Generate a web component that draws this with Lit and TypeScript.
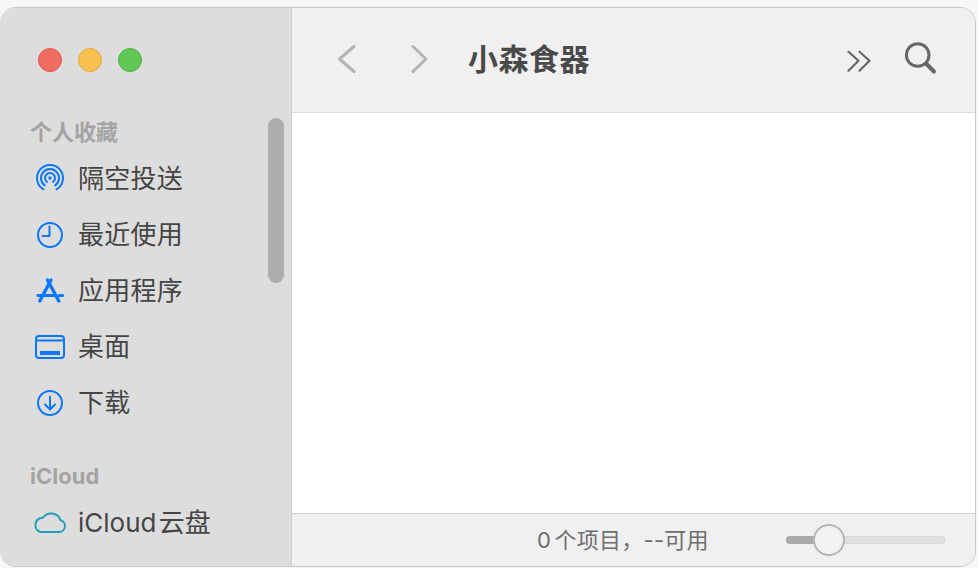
import { LitElement, html, css, svg } from "lit";
import { customElement } from "lit/decorators.js";

const BLUE = "#0a78f5";
const items = [
  {
    label: "隔空投送",
    icon: svg`<g fill="none" stroke="${BLUE}" stroke-width="2" stroke-linecap="round"><path d="M9.5 26.3a13 13 0 1 1 13 0"/><path d="M10.8 22.4a9 9 0 1 1 10.4 0"/><path d="M13 19a5 5 0 1 1 6 0"/></g><circle cx="16" cy="15" r="1.7" fill="${BLUE}"/>`,
  },
  {
    label: "最近使用",
    icon: svg`<g fill="none" stroke="${BLUE}" stroke-width="2" stroke-linecap="round" stroke-linejoin="round"><circle cx="16" cy="16" r="12"/><path d="M15.5 7.5V17H8.5"/></g>`,
  },
  {
    label: "应用程序",
    icon: svg`<g fill="none" stroke="${BLUE}" stroke-linecap="round"><g stroke-width="3.4"><path d="M13.5 5 24.8 26"/><path d="M17 5 5.8 26"/></g><g stroke-width="3.2"><path d="M4 20.5H20"/><path d="M25 20.5h3.5"/></g></g>`,
  },
  {
    label: "桌面",
    icon: svg`<g fill="none" stroke="${BLUE}" stroke-width="2"><rect x="2" y="5" width="28" height="22" rx="3"/><path d="M2 9.5h28"/></g><rect x="6" y="20" width="20" height="4" fill="${BLUE}"/>`,
  },
  {
    label: "下载",
    icon: svg`<g fill="none" stroke="${BLUE}" stroke-width="2" stroke-linecap="round" stroke-linejoin="round"><circle cx="16" cy="16" r="12"/><path d="M16 9.5V22"/><path d="M11 17.5l5 5 5-5"/></g>`,
  },
];

@customElement("app-root")
export class AppRoot extends LitElement {
  static styles = css`
    :host {
      display: block;
      width: 978px;
      height: 568px;
      box-sizing: border-box;
      padding: 7px 2px 0 0;
      background: #f7f7f7;
      overflow: hidden;
      font-family: "Inter", "Noto Sans CJK SC", "Noto Sans", sans-serif;
    }
    .window {
      position: relative;
      display: flex;
      height: 560px;
      box-sizing: border-box;
      border: 1px solid #c9c9c9;
      border-left: none;
      border-radius: 16px;
      overflow: hidden;
      background: #fff;
    }
    .sidebar {
      width: 292px;
      flex: none;
      box-sizing: border-box;
      background: #dddddd;
      border-right: 1px solid #cfcfcf;
      padding: 0 0 0 30px;
      position: relative;
    }
    .lights {
      display: flex;
      gap: 16px;
      padding: 40px 0 0 8px;
    }
    .light {
      width: 24px;
      height: 24px;
      border-radius: 50%;
      box-sizing: border-box;
    }
    .red { background: #f16c61; border: 1px solid #dc574e; }
    .yellow { background: #f7c04f; border: 1px solid #e3a73c; }
    .green { background: #60c654; border: 1px solid #4fb044; }
    .heading {
      font-size: 22px;
      line-height: 30px;
      font-weight: 700;
      color: #a3a3a3;
      height: 30px;
    }
    .fav { margin-top: 45px; }
    .cloud-head { margin-top: 30px; }
    .row {
      display: flex;
      align-items: center;
      height: 56px;
      margin-left: 4px;
      gap: 12px;
      font-size: 26px;
      color: #454545;
    }
    .row span {
      padding-bottom: 6px;
      letter-spacing: 0.25px;
    }
    .rows { margin-top: 4px; }
    .row svg {
      width: 32px;
      height: 32px;
      flex: none;
    }
    .cloud-row { margin-top: 4px; }
    .row .cloud-label { letter-spacing: 0; word-spacing: -5px; }
    .thumb {
      position: absolute;
      left: 268px;
      top: 110px;
      width: 16px;
      height: 165px;
      border-radius: 8px;
      background: #adadad;
    }
    .main {
      flex: 1;
      display: flex;
      flex-direction: column;
      min-width: 0;
    }
    .toolbar {
      height: 105px;
      flex: none;
      box-sizing: border-box;
      display: flex;
      align-items: center;
      background: #f0f0f0;
      border-bottom: 1px solid #dcdcdc;
      padding: 0 38px 0 40px;
    }
    .toolbar svg { display: block; flex: none; }
    .nav-next { margin-left: 43px; }
    .title {
      margin-left: 33px;
      padding-bottom: 2px;
      font-size: 30px;
      font-weight: 700;
      letter-spacing: 0.5px;
      color: #4a4a4a;
      flex: 1;
      line-height: 40px;
    }
    .search { margin-left: 32px; }
    .content { flex: 1; background: #fff; }
    .status {
      height: 53px;
      flex: none;
      box-sizing: border-box;
      border-top: 1px solid #cfcfcf;
      background: #f0f0f0;
      display: flex;
      align-items: center;
      padding-left: 245px;
      font-size: 22px;
      color: #6e6e6e;
    }
    .status-text {
      width: 249px;
      flex: none;
      letter-spacing: 0.25px;
      word-spacing: -3px;
      white-space: nowrap;
      padding-bottom: 5px;
    }
    .slider {
      position: relative;
      width: 159px;
      height: 8px;
      border-radius: 4px;
      background: #e0e0e0;
      box-shadow: inset 0 0 0 1px #d8d8d8;
      flex: none;
    }
    .slider-fill {
      width: 32px;
      height: 8px;
      border-radius: 4px 0 0 4px;
      background: #a9a9a9;
    }
    .knob {
      position: absolute;
      left: 27px;
      top: -12px;
      width: 32px;
      height: 32px;
      box-sizing: border-box;
      border-radius: 50%;
      background: #f2f2f2;
      border: 2px solid #b5b5b5;
    }
  `;

  render() {
    return html`
      <div class="window">
        <aside class="sidebar">
          <div class="lights">
            <div class="light red"></div>
            <div class="light yellow"></div>
            <div class="light green"></div>
          </div>
          <div class="heading fav">个人收藏</div>
          <div class="rows">
            ${items.map(
              (i) => html`<div class="row">
                <svg viewBox="0 0 32 32">${i.icon}</svg>
                <span>${i.label}</span>
              </div>`
            )}
          </div>
          <div class="heading cloud-head">iCloud</div>
          <div class="row cloud-row">
            <svg viewBox="0 0 32 32">
              <path
                d="M7 25H25A6 6 0 0 0 26.5 13.2A10 10 0 0 0 8.8 10.8A7 7 0 0 0 1.5 18.5A6.5 6.5 0 0 0 7 25Z"
                fill="none"
                stroke="#1fa0b8"
                stroke-width="2"
                stroke-linejoin="round"
              />
            </svg>
            <span class="cloud-label">iCloud 云盘</span>
          </div>
          <div class="thumb"></div>
        </aside>
        <main class="main">
          <header class="toolbar">
            <svg width="30" height="34" viewBox="0 0 30 34">
              <path d="M22 3.5 7.5 16 22 28.5" fill="none" stroke="#b4b4b4" stroke-width="3" stroke-linecap="round" stroke-linejoin="round" />
            </svg>
            <svg class="nav-next" width="30" height="34" viewBox="0 0 30 34">
              <path d="M8 3.5 21 16 8 28.5" fill="none" stroke="#b4b4b4" stroke-width="3" stroke-linecap="round" stroke-linejoin="round" />
            </svg>
            <div class="title">小森食器</div>
            <svg width="28" height="26" viewBox="0 0 28 26">
              <path d="M5.5 4.7l10 9-10 10M16.5 4.7l10 9-10 10" fill="none" stroke="#676767" stroke-width="2.2" stroke-linecap="round" stroke-linejoin="round" />
            </svg>
            <svg class="search" width="34" height="36" viewBox="0 0 34 36">
              <circle cx="14.7" cy="13" r="11.3" fill="none" stroke="#676767" stroke-width="3" />
              <path d="M23 21.5l8 8" fill="none" stroke="#676767" stroke-width="4" stroke-linecap="round" />
            </svg>
          </header>
          <section class="content"></section>
          <footer class="status">
            <div class="status-text">0 个项目，--可用</div>
            <div class="slider">
              <div class="slider-fill"></div>
              <div class="knob"></div>
            </div>
          </footer>
        </main>
      </div>
    `;
  }
}
